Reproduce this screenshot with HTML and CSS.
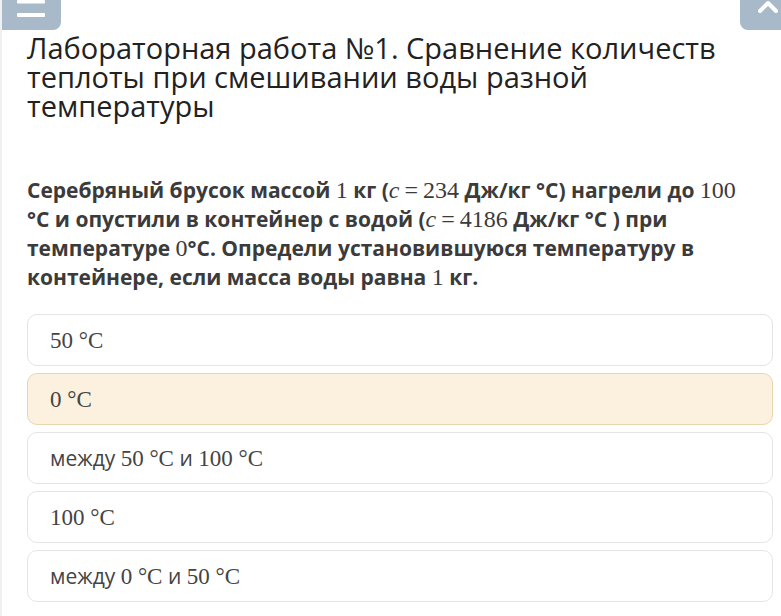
FILE: index.html
```html
<!DOCTYPE html>
<html lang="ru">
<head>
<meta charset="utf-8">
<link rel="stylesheet" href="styles.css">
</head>
<body>
<div class="page">
  <div class="topbar">
    <div class="btn btn-menu">
      <svg width="28" height="18" viewBox="0 0 28 18"><rect x="0" y="0" width="28" height="3.5" rx="1" fill="#fff"/><rect x="0" y="13" width="28" height="4" rx="1" fill="#fff"/></svg>
    </div>
    <div class="btn btn-up">
      <svg width="20" height="14" viewBox="0 0 20 14"><path d="M2 11 L10 3 L18 11" fill="none" stroke="#fff" stroke-width="4" stroke-linecap="round" stroke-linejoin="round"/></svg>
    </div>
  </div>
  <div class="content">
    <h1 class="title">Лабораторная работа №1. Сравнение количеств теплоты при смешивании воды разной температуры</h1>
    <p class="question">Серебряный брусок массой <span class="m">1</span> кг (<span class="m"><i>c</i><span class="eq">=</span>234</span> Дж/кг °С) нагрели до <span class="m">100</span> °С и опустили в контейнер с водой (<span class="m"><i>c</i><span class="eq">=</span>4186</span> Дж/кг °С ) при температуре <span class="m">0</span>°С. Определи установившуюся температуру в контейнере, если масса воды равна <span class="m">1</span> кг.</p>
    <div class="options">
      <div class="option"><span class="m">50 °C</span></div>
      <div class="option selected"><span class="m">0 °C</span></div>
      <div class="option">между <span class="m">50 °C</span> и <span class="m">100 °C</span></div>
      <div class="option"><span class="m">100 °C</span></div>
      <div class="option">между <span class="m">0 °C</span> и <span class="m">50 °C</span></div>
    </div>
  </div>
</div>
</body>
</html>
```

FILE: styles.css
```css
html, body {
  margin: 0;
  padding: 0;
  background: #fff;
}
.page {
  width: 781px;
  height: 616px;
  overflow: hidden;
  border-left: 2px solid #eef0f2;
  box-sizing: border-box;
}
.topbar {
  display: flex;
  justify-content: space-between;
  height: 30px;
  margin-left: -2px;
}
.btn {
  background: #a8bac9;
  display: flex;
  align-items: flex-start;
}
.btn-menu {
  width: 61px;
  height: 30px;
  border-bottom-right-radius: 8px;
  padding-left: 17px;
  box-sizing: border-box;
}
.btn-up {
  width: 41px;
  height: 30px;
  border-bottom-left-radius: 8px;
  padding-left: 18px;
  box-sizing: border-box;
}
.content {
  padding: 0 8px 0 25px;
}
.title {
  font-family: "Open Sans", sans-serif;
  font-weight: 400;
  font-size: 29px;
  line-height: 29px;
  color: #222;
  margin: 3px 0 0 0;
  max-width: 735px;
}
.question {
  font-family: "Open Sans", sans-serif;
  font-weight: 700;
  font-size: 21px;
  line-height: 29px;
  color: #3b3b3b;
  margin: 56px 0 0 0;
  max-width: 725px;
}
.m {
  font-family: "Liberation Serif", serif;
  font-weight: 400;
  font-size: 24px;
  line-height: 1;
  white-space: pre;
}
.eq {
  padding: 0 5px;
}
.options {
  display: flex;
  flex-direction: column;
  gap: 7px;
  margin-top: 22px;
}
.option {
  height: 52px;
  box-sizing: border-box;
  border: 1px solid #e2e4e6;
  border-radius: 10px;
  display: flex;
  align-items: center;
  padding-left: 22px;
  font-family: "Open Sans", sans-serif;
  font-size: 21px;
  color: #444;
  white-space: pre;
}
.option .m {
  font-size: 23px;
  color: #444;
}
.option.selected {
  background: #fbf1de;
  border-color: #e9d6ad;
}
```
